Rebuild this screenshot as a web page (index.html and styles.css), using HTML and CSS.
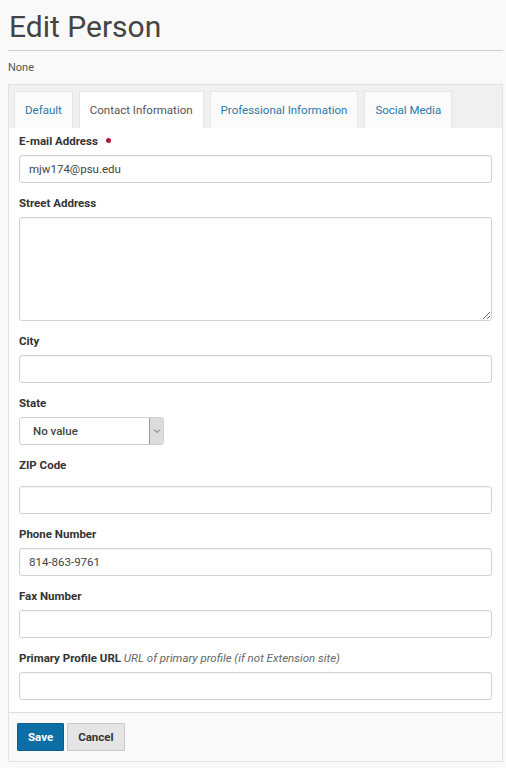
FILE: index.html
```html
<!DOCTYPE html>
<html lang="en">
<head>
<meta charset="utf-8">
<title>Edit Person</title>
<link rel="stylesheet" href="styles.css">
</head>
<body>
<div class="page">
  <h1 class="title">Edit Person</h1>
  <p class="subtitle">None</p>
  <div class="panel">
    <div class="tabs">
      <a class="tab">Default</a>
      <a class="tab tab-active">Contact Information</a>
      <a class="tab">Professional Information</a>
      <a class="tab">Social Media</a>
    </div>
    <div class="panel-body">
      <div class="field">
        <label class="label">E-mail Address <span class="required"></span></label>
        <input class="input" type="text" value="mjw174@psu.edu">
      </div>
      <div class="field">
        <label class="label">Street Address</label>
        <textarea class="input textarea"></textarea>
      </div>
      <div class="field">
        <label class="label">City</label>
        <input class="input" type="text" value="">
      </div>
      <div class="field">
        <label class="label">State</label>
        <div class="select">
          <span class="select-value">No value</span>
          <span class="select-arrow"><svg width="8" height="6" viewBox="0 0 8 6"><path d="M1 1.5 L4 4.5 L7 1.5" fill="none" stroke="#666" stroke-width="1"/></svg></span>
        </div>
      </div>
      <div class="field">
        <label class="label label-zip">ZIP Code</label>
        <input class="input" type="text" value="">
      </div>
      <div class="field">
        <label class="label">Phone Number</label>
        <input class="input" type="text" value="814-863-9761">
      </div>
      <div class="field">
        <label class="label">Fax Number</label>
        <input class="input" type="text" value="">
      </div>
      <div class="field field-last">
        <label class="label">Primary Profile URL <span class="hint">URL of primary profile (if not Extension site)</span></label>
        <input class="input" type="text" value="">
      </div>
    </div>
    <div class="panel-footer">
      <button class="btn btn-primary">Save</button>
      <button class="btn btn-default">Cancel</button>
    </div>
  </div>
</div>
</body>
</html>
```

FILE: styles.css
```css
html, body {
  margin: 0;
  padding: 0;
  background: #f9f9f9;
}
body {
  font-family: Roboto, "Liberation Sans", Arial, sans-serif;
  color: #333;
}
.page {
  padding: 0 3px 0 8px;
}
.title {
  margin: 9px 0 0 0;
  padding: 0 0 5px 1px;
  font-size: 30px;
  line-height: 36px;
  font-weight: 400;
  color: #444;
  border-bottom: 1px solid #cfcfcf;
}
.subtitle {
  margin: 10px 0 9px 0;
  font-size: 11px;
  line-height: 14px;
  color: #555;
}
.panel {
  border: 1px solid #e2e2e2;
  background: #fff;
}
.tabs {
  display: flex;
  gap: 6px;
  padding: 6px 5px 0 5px;
  background: #f0f0f0;
}
.tab {
  display: flex;
  align-items: center;
  height: 37px;
  padding: 0 10px;
  box-sizing: border-box;
  background: #fbfbfb;
  border: 1px solid #e6e6e6;
  border-bottom: none;
  font-size: 11.5px;
  color: #2c78a8;
}
.tab-active {
  background: #fff;
  color: #555;
}
.panel-body {
  padding: 6px 10px 12px 10px;
}
.field {
  margin-bottom: 13px;
}
.field-last {
  margin-bottom: 0;
}
.label {
  display: block;
  font-size: 11.5px;
  line-height: 14px;
  font-weight: 700;
  color: #333;
  margin-bottom: 7px;
}
.label-zip {
  margin-bottom: 14px;
}
.required {
  display: inline-block;
  width: 5px;
  height: 5px;
  border-radius: 50%;
  background: #b3163c;
  margin-left: 5px;
  vertical-align: 2px;
}
.hint {
  font-weight: 400;
  font-style: italic;
  color: #666;
}
.input {
  display: block;
  width: 100%;
  height: 28px;
  box-sizing: border-box;
  border: 1px solid #d2d2d2;
  border-radius: 3px;
  background: #fff;
  box-shadow: inset 0 1px 1px rgba(0,0,0,0.04);
  padding: 0 9px;
  font-family: Roboto, "Liberation Sans", Arial, sans-serif;
  font-size: 11.5px;
  color: #444;
  margin: 0;
}
.textarea {
  height: 104px;
  resize: vertical;
}
.select {
  display: flex;
  width: 145px;
  height: 28px;
  box-sizing: border-box;
  border: 1px solid #cfcfcf;
  border-radius: 3px;
  background: #fff;
  overflow: hidden;
}
.select-value {
  flex: 1;
  display: flex;
  align-items: center;
  padding-left: 13px;
  font-size: 11.5px;
  font-weight: 500;
  color: #444;
}
.select-arrow {
  width: 13px;
  display: flex;
  align-items: center;
  justify-content: center;
  background: #dcdcdc;
  border-left: 1px solid #9a9a9a;
}
.panel-footer {
  display: flex;
  gap: 3px;
  padding: 10px 8px 10px 8px;
  border-top: 1px solid #dedede;
  background: #fafafa;
}
.btn {
  height: 28px;
  padding: 0 10px;
  box-sizing: border-box;
  font-family: Roboto, "Liberation Sans", Arial, sans-serif;
  font-size: 11.5px;
  font-weight: 700;
  border-radius: 1px;
  margin: 0;
}
.btn-primary {
  background: #0b6ea5;
  border: 1px solid #0a5f8e;
  color: #fff;
}
.btn-default {
  background: #e5e5e5;
  border: 1px solid #c8c8c8;
  color: #333;
}
```
